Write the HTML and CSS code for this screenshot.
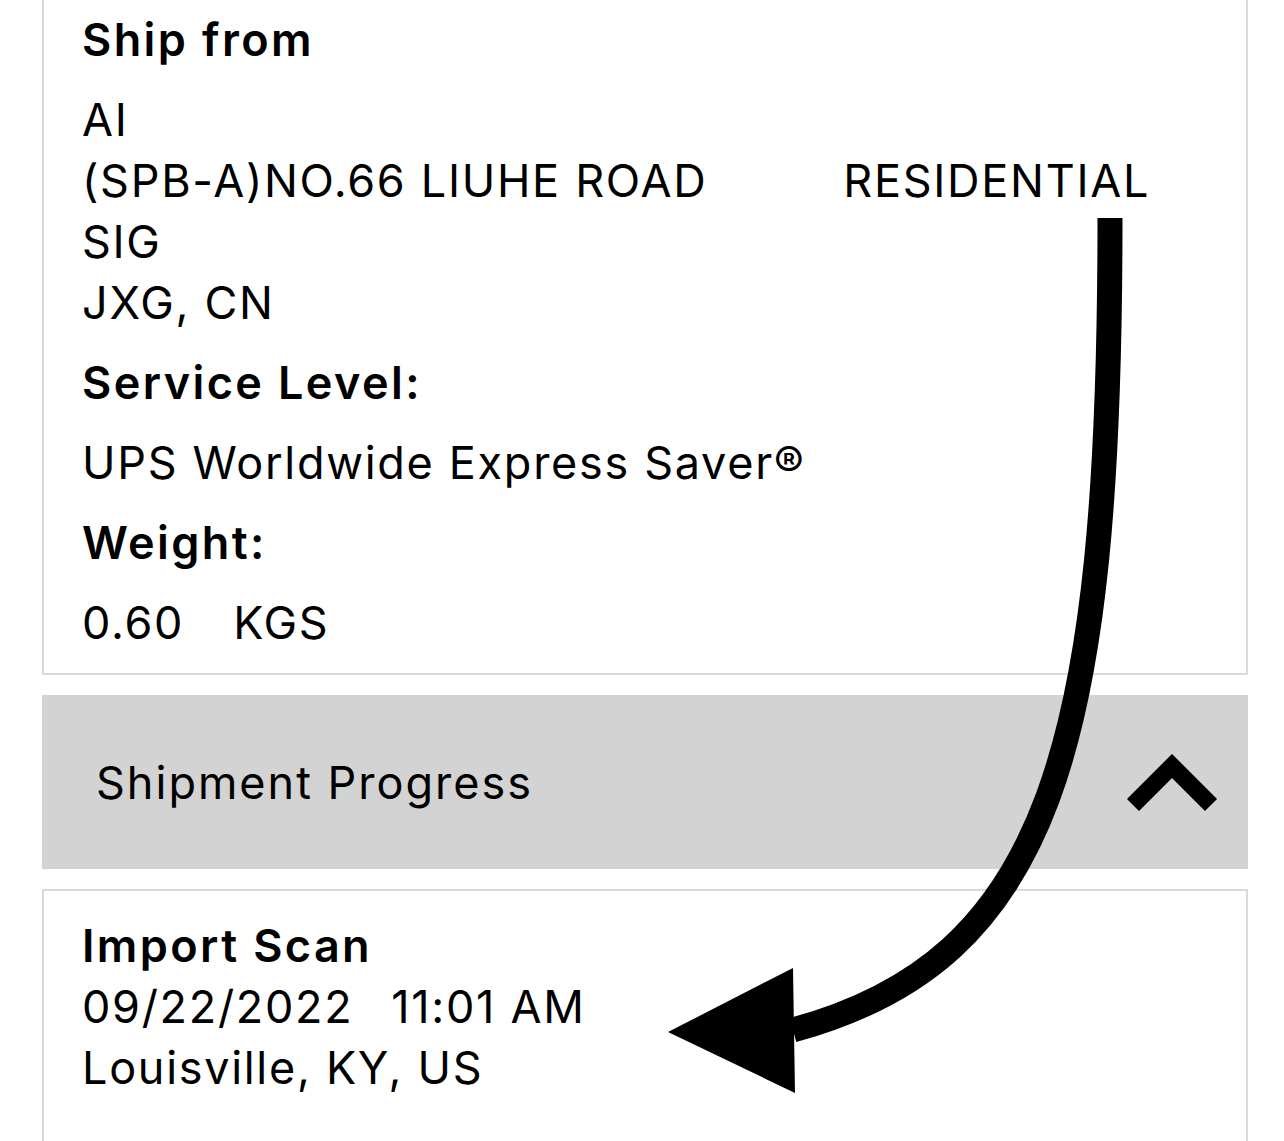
FILE: index.html
```html
<!DOCTYPE html>
<html lang="en">

<head>
  <meta charset="UTF-8">
  <title>Tracking Details</title>
  <meta name="viewport" content="width=device-width, initial-scale=1">
  <link rel="stylesheet" href="styles.css">
</head>

<body>
  <div class="page">
    <section class="card details">
      <div class="label">Ship from</div>
      <div class="value">
        <div>AI</div>
        <div class="addr-line"><span>(SPB-A)NO.66 LIUHE ROAD</span><span class="addr-type">RESIDENTIAL</span></div>
        <div>SIG</div>
        <div>JXG, CN</div>
      </div>
      <div class="label">Service Level:</div>
      <div class="value">UPS Worldwide Express Saver®</div>
      <div class="label">Weight:</div>
      <div class="value">0.60<span class="unit">KGS</span></div>
    </section>

    <button class="section-toggle" type="button">
      <span>Shipment Progress</span>
      <svg class="chevron" width="91" height="57" viewBox="0 0 91 57">
        <polyline points="6,51 45,12 84,51" fill="none" stroke="#000" stroke-width="17" stroke-linejoin="miter" />
      </svg>
    </button>

    <section class="card activity">
      <div class="activity-title">Import Scan</div>
      <div>09/22/2022<span class="time">11:01 AM</span></div>
      <div>Louisville, KY, US</div>
    </section>
  </div>

  <!-- hand-drawn annotation arrow -->
  <svg class="annotation" width="1284" height="1141" viewBox="0 0 1284 1141">
    <path d="M1110 218 C1110 750 1050 960 793 1030" fill="none" stroke="#000" stroke-width="25" />
    <polygon points="668,1032 793,968 795,1093" fill="#000" />
  </svg>
</body>

</html>
```

FILE: styles.css
```css
body {
  font-family: Inter, "Liberation Sans", Arial, sans-serif;
  font-size: 45px;
  line-height: 61px;
  letter-spacing: 1.7px;
  color: #000;
  background: #fff;
  margin: 0;
  padding: 0;
  position: relative;
}

.page {
  display: flex;
  flex-direction: column;
  gap: 20px;
  padding: 0 36px 0 42px;
  margin-top: -16px;
}

.card {
  background: #fff;
  border: 2px solid #dadada;
  padding: 23px 36px 20px 38px;
}

.details {
  display: flex;
  flex-direction: column;
  gap: 19px;
}

.label,
.activity-title {
  font-weight: 600;
  letter-spacing: 2.4px;
}

.addr-line {
  display: flex;
  gap: 136px;
}

.unit {
  margin-left: 49px;
}

.section-toggle {
  display: flex;
  align-items: center;
  justify-content: space-between;
  width: 100%;
  height: 174px;
  padding: 0 30px 0 54px;
  background: #d3d3d3;
  border: none;
  font: inherit;
  letter-spacing: 2px;
  color: #000;
  text-align: left;
  cursor: pointer;
}

.activity {
  padding-top: 24px;
  padding-bottom: 80px;
}

.time {
  margin-left: 38px;
}

.annotation {
  position: absolute;
  top: 0;
  left: 0;
  pointer-events: none;
}
```
